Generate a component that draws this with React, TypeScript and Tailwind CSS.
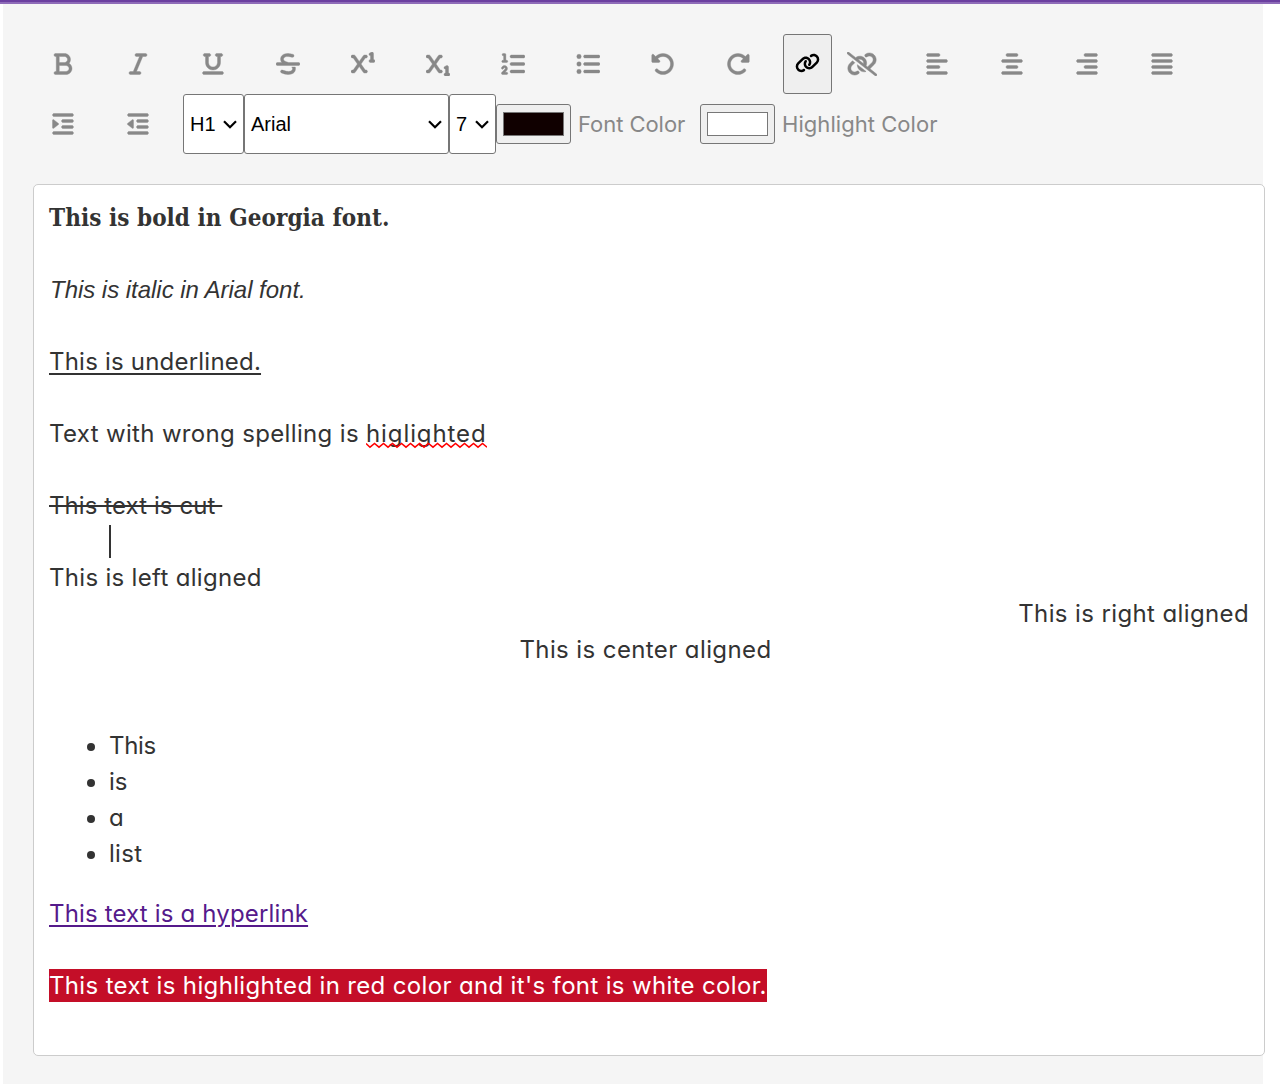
import type { ReactNode } from "react";
import type { IconType } from "react-icons";
import {
  FaAlignCenter,
  FaAlignJustify,
  FaAlignLeft,
  FaAlignRight,
  FaBold,
  FaIndent,
  FaItalic,
  FaLink,
  FaListOl,
  FaListUl,
  FaOutdent,
  FaRotateLeft,
  FaRotateRight,
  FaStrikethrough,
  FaSubscript,
  FaSuperscript,
  FaUnderline,
} from "react-icons/fa6";

const history: [string, IconType][] = [
  ["Bold", FaBold],
  ["Italic", FaItalic],
  ["Underline", FaUnderline],
  ["Strikethrough", FaStrikethrough],
  ["Superscript", FaSuperscript],
  ["Subscript", FaSubscript],
  ["Ordered list", FaListOl],
  ["Unordered list", FaListUl],
  ["Undo", FaRotateLeft],
  ["Redo", FaRotateRight],
];

const alignment: [string, IconType][] = [
  ["Align left", FaAlignLeft],
  ["Align center", FaAlignCenter],
  ["Align right", FaAlignRight],
  ["Justify", FaAlignJustify],
];

const spacing: [string, IconType][] = [
  ["Indent", FaIndent],
  ["Outdent", FaOutdent],
];

function Tool({ label, icon: Icon }: { label: string; icon: IconType }) {
  return (
    <button aria-label={label} className="mr-[15px] flex h-[60px] w-[60px] items-center justify-center text-[24px] text-[#888888]">
      <Icon className="[stroke-width:8px]" />
    </button>
  );
}

function UnlinkIcon() {
  return (
    <svg viewBox="0 0 640 512" fill="currentColor" stroke="currentColor" strokeWidth="10" className="h-[24px] w-[30px]">
      <path d="M185.7 120.3C242.5 75.82 324.7 79.73 376.1 131.1C420.1 175.1 430.9 239.6 406.7 293.5L438.6 318.4L534.5 222.5C566 191 566 139.1 534.5 108.5C506.7 80.63 462.7 76.99 430.7 99.9L429.1 101C414.7 111.3 394.7 107.1 384.5 93.58C374.2 79.2 377.5 59.21 391.9 48.94L393.5 47.82C451 6.731 529.8 13.25 579.8 63.24C636.3 119.7 636.3 211.3 579.8 267.7L489.3 358.2L630.8 469.1C641.2 477.3 643.1 492.4 634.9 502.8C626.7 513.2 611.6 515.1 601.2 506.9L9.196 42.89C-1.236 34.71-3.065 19.63 5.112 9.196C13.29-1.236 28.37-3.065 38.81 5.112L185.7 120.3zM238.1 161.1L353.4 251.7C359.3 225.5 351.7 197.2 331.7 177.2C306.6 152.1 269.1 147 238.1 161.1zM263 380C233.1 350.1 218.7 309.8 220.9 270L406.6 416.4C357.4 431 301.9 418.9 263 380zM116.6 187.9L167.2 227.8L105.5 289.5C73.99 320.1 73.99 372 105.5 403.5C133.3 431.4 177.3 435 209.3 412.1L210.9 410.1C225.3 400.7 245.3 404 255.5 418.4C265.8 432.8 262.5 452.8 248.1 463.1L246.5 464.2C188.1 505.3 110.2 498.7 60.21 448.8C3.741 392.3 3.741 300.7 60.21 244.3L116.6 187.9z" />
    </svg>
  );
}

function Select({ value, className }: { value: string; className: string }) {
  return (
    <button className={`flex h-[60px] items-center justify-between rounded-[3px] border border-[#767676] bg-white pl-[6px] pr-[6px] font-['Liberation_Sans',sans-serif] text-[20px] text-black ${className}`}>
      {value}
      <svg width="14" height="9" viewBox="0 0 14 9" fill="none" stroke="currentColor" strokeWidth="2.2">
        <path d="M1 1.2 7 7.2 13 1.2" />
      </svg>
    </button>
  );
}

function Swatch({ className }: { className: string }) {
  return (
    <div className="flex h-[40px] w-[75px] rounded-[3px] border border-[#767676] bg-[#efefef] px-[6px] py-[7px]">
      <div className={`w-full border border-[#777777] ${className}`} />
    </div>
  );
}

function Line({ children, className = "" }: { children?: ReactNode; className?: string }) {
  return <div className={`h-9 whitespace-pre ${className}`}>{children}</div>;
}

export default function App() {
  return (
    <div className="h-[1084px] overflow-hidden bg-white font-[Inter,sans-serif] [font-feature-settings:'cv11']">
      <div className="h-[4px] border-b-2 border-[#8e6bb8] bg-[#6b3fa0]" />
      <main className="ml-[3px] h-[1080px] w-[1260px] bg-[#f5f5f5] pl-[30px] pt-[30px]">
        <div className="flex h-[60px]">
          {history.map(([label, icon]) => (
            <Tool key={label} label={label} icon={icon} />
          ))}
          <button aria-label="Link" className="flex h-[60px] w-[49px] items-center justify-center rounded-[3px] border border-[#767676] bg-[#efefef] pb-[2px] text-black">
            <FaLink className="h-[20px] w-[25px]" />
          </button>
          <button aria-label="Unlink" className="mr-[15px] flex h-[60px] w-[60px] items-center justify-center text-[#888888]">
            <UnlinkIcon />
          </button>
          {alignment.map(([label, icon]) => (
            <Tool key={label} label={label} icon={icon} />
          ))}
        </div>
        <div className="flex h-[60px] items-center">
          {spacing.map(([label, icon]) => (
            <Tool key={label} label={label} icon={icon} />
          ))}
          <Select value="H1" className="w-[61px]" />
          <Select value="Arial" className="w-[205px]" />
          <Select value="7" className="w-[47px]" />
          <Swatch className="bg-[#100000]" />
          <span className="w-[129px] pl-[7px] text-[22px] tracking-[-0.05px] text-[#888888]">Font Color</span>
          <Swatch className="bg-white" />
          <span className="pl-[7px] text-[22px] tracking-[0.05px] text-[#888888]">Highlight Color</span>
        </div>
        <div className="mt-[30px] h-[872px] w-[1232px] rounded-[5px] border border-[#cccccc] bg-white p-[15px] text-[24px] leading-9 text-[#333333]">
          <Line className="font-['DejaVu_Serif_Condensed','DejaVu_Serif',serif] font-bold [font-stretch:condensed] tracking-[0.06px]">This is bold in Georgia font.</Line>
          <Line />
          <Line className="pl-px font-['Liberation_Sans',sans-serif] italic tracking-[-0.03px]">This is italic in Arial font.</Line>
          <Line />
          <Line className="tracking-[0.21px]">
            <span className="underline decoration-2 underline-offset-[3px]">This is underlined.</span>
          </Line>
          <Line />
          <Line className="tracking-[0.34px]">
            Text with wrong spelling is{" "}
            <span className="relative tracking-[0.9px]">
              higlighted
              <svg className="absolute left-0 top-[23px] h-[7px] w-[121px]" fill="none" stroke="#ff0000" strokeWidth="1.5">
                <path d="M0 1.5L4 5.2 8.5 1.5 13 5.2 17.5 1.5 22 5.2 26.5 1.5 31 5.2 35.5 1.5 40 5.2 44.5 1.5 49 5.2 53.5 1.5 58 5.2 62.5 1.5 67 5.2 71.5 1.5 76 5.2 80.5 1.5 85 5.2 89.5 1.5 94 5.2 98.5 1.5 103 5.2 107.5 1.5 112 5.2 116.5 1.5 121 5.2" />
              </svg>
            </span>
          </Line>
          <Line />
          <Line className="tracking-[0.08px]">
            <span className="line-through decoration-2">{"This text is cut "}</span>
          </Line>
          <Line className="flex pl-[60px] pt-px">
            <span className="h-[33px] w-[2px] bg-[#333333]" />
          </Line>
          <Line className="tracking-[0.31px]">This is left aligned</Line>
          <Line className="text-right tracking-[0.38px]">This is right aligned</Line>
          <Line className="pr-[7px] text-center tracking-[0.4px]">This is center aligned</Line>
          <Line />
          <ul className="my-6 list-disc pl-[60px]">
            <li className="tracking-[-0.3px]">This</li>
            <li>is</li>
            <li>a</li>
            <li className="tracking-[0.3px]">list</li>
          </ul>
          <Line className="tracking-[0.16px] text-[#551a8b]">
            <a className="underline decoration-2 underline-offset-[3px]">This text is a hyperlink</a>
          </Line>
          <Line />
          <Line className="tracking-[0.345px] text-white">
            <span className="bg-[#c40e28] py-[2px]">This text is highlighted in red color and it's font is white color.</span>
          </Line>
        </div>
      </main>
    </div>
  );
}
